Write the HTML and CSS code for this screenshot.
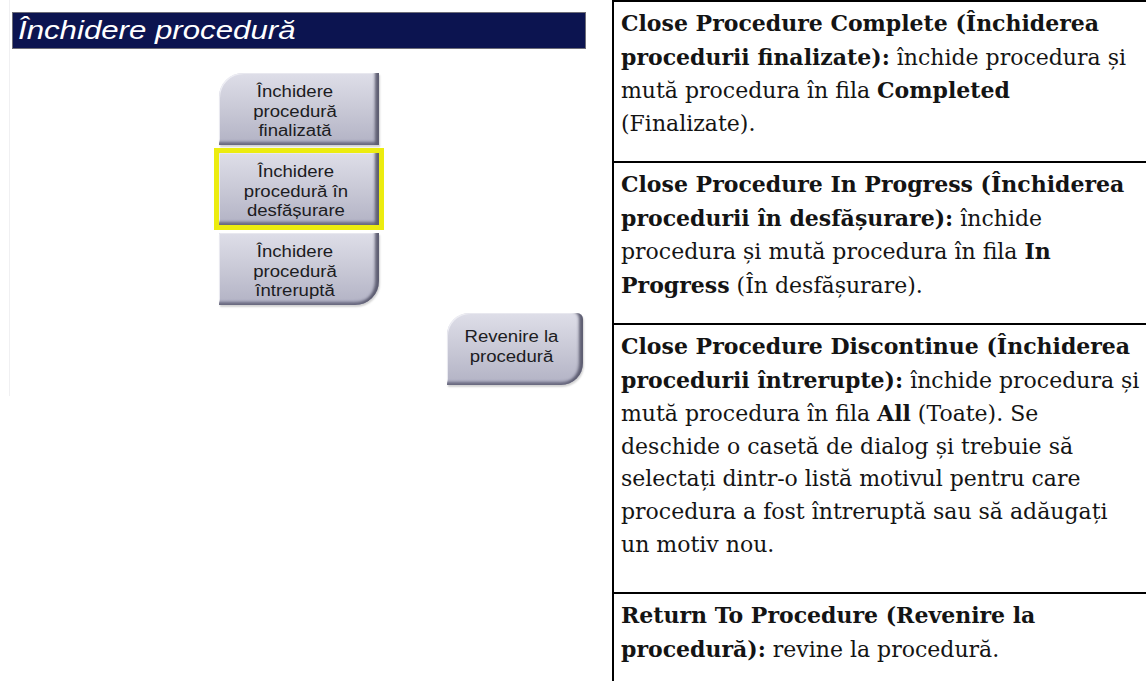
FILE: index.html
```html
<!DOCTYPE html>
<html lang="ro">
<head>
<meta charset="utf-8">
<title>Închidere procedură</title>
<link rel="stylesheet" href="styles.css">
</head>
<body>
<div class="page">
  <div class="shot">
    <div class="titlebar"><span class="stretch">Închidere procedură</span></div>
    <div class="stack">
      <div class="btn btn-top"><span class="label">Închidere<br>procedură<br>finalizată</span></div>
      <div class="hl"><div class="btn"><span class="label">Închidere<br>procedură în<br>desfășurare</span></div></div>
      <div class="btn btn-bottom"><span class="label">Închidere<br>procedură<br>întreruptă</span></div>
    </div>
    <div class="btn btn-return"><span class="label">Revenire la<br>procedură</span></div>
  </div>
  <div class="table">
    <div class="row r1">
      <p><b>Close Procedure Complete (Închiderea<br>procedurii finalizate):</b> închide procedura și<br>mută procedura în fila <b>Completed</b><br>(Finalizate).</p>
    </div>
    <div class="row r2">
      <p><b>Close Procedure In Progress (Închiderea<br>procedurii în desfășurare):</b> închide<br>procedura și mută procedura în fila <b>In<br>Progress</b> (În desfășurare).</p>
    </div>
    <div class="row r3">
      <p><b>Close Procedure Discontinue (Închiderea<br>procedurii întrerupte):</b> închide procedura și<br>mută procedura în fila <b>All</b> (Toate). Se<br>deschide o casetă de dialog și trebuie să<br>selectați dintr-o listă motivul pentru care<br>procedura a fost întreruptă sau să adăugați<br>un motiv nou.</p>
    </div>
    <div class="row r4">
      <p><b>Return To Procedure (Revenire la<br>procedură):</b> revine la procedură.</p>
    </div>
  </div>
</div>
</body>
</html>
```

FILE: styles.css
```css
* { box-sizing: border-box; }
html, body { margin: 0; padding: 0; background: #fff; }
body { width: 1146px; height: 681px; overflow: hidden; }

.page {
  display: flex;
  align-items: flex-start;
  height: 681px;
}

.shot {
  width: 603px;
  margin-left: 9px;
  flex: none;
  height: 396px;
  padding: 12px 0 0 2px;
  display: flex;
  flex-direction: column;
  align-items: flex-start;
  border-left: 1px solid #f0f0f2;
}

.titlebar {
  width: 574px;
  height: 37px;
  background: #0c1450;
  border: 1px solid #6d6d78;
  color: #fff;
  font-family: "Liberation Sans", Arial, sans-serif;
  font-style: italic;
  font-size: 26px;
  line-height: 34px;
  padding-left: 5px;
  overflow: hidden;
}
.stretch {
  display: inline-block;
  transform: scaleX(1.2);
  transform-origin: left center;
}

.stack {
  margin-top: 24px;
  margin-left: 207px;
  display: flex;
  flex-direction: column;
  gap: 3px;
}

.btn {
  width: 160px;
  height: 72px;
  padding: 9px 7px 0 0;
  text-align: center;
  font-family: "Liberation Sans", Arial, sans-serif;
  font-size: 16px;
  line-height: 19.5px;
  color: #1c1c22;
  background: linear-gradient(180deg, #dedee8 0%, #cbcbd8 45%, #b2b2c4 100%);
  box-shadow:
    inset -6px 0 3px -2px #5e5e72,
    inset 0 -5px 3px -2px #6a6a80,
    inset 1px 1px 0 #eeeef4,
    1px 2px 2px rgba(0, 0, 0, 0.18);
}
.label {
  display: inline-block;
  transform: scaleX(1.16);
}

.hl {
  border: 5px solid #ecec10;
  margin: 0 -5px;
  width: 170px;
}
.hl .btn { box-shadow:
    inset -6px 0 3px -2px #5e5e72,
    inset 0 -5px 3px -2px #6a6a80,
    inset 1px 1px 0 #eeeef4; }

.btn-top { border-top-left-radius: 24px; }
.btn-bottom { border-bottom-right-radius: 24px; }

.btn-return {
  margin-top: 8px;
  margin-left: 435px;
  width: 136px;
  height: 72px;
  padding-top: 14px;
  border-top-left-radius: 22px;
  border-top-right-radius: 6px;
  border-bottom-right-radius: 22px;
}

.table {
  flex: 1;
  min-width: 0;
  align-self: stretch;
  border-left: 2px solid #000;
  border-top: 2px solid #000;
  font-family: "DejaVu Serif", "Liberation Serif", serif;
  font-size: 22px;
  line-height: 32.6px;
  color: #141414;
  overflow: hidden;
}

.row {
  border-bottom: 2px solid #000;
  padding: 5px 0 0 7px;
}
.row p { margin: 0; white-space: nowrap; }
.r1 { height: 161px; }
.r2 { height: 162px; }
.r3 { height: 269px; }
.r4 { border-bottom: none; }
```
